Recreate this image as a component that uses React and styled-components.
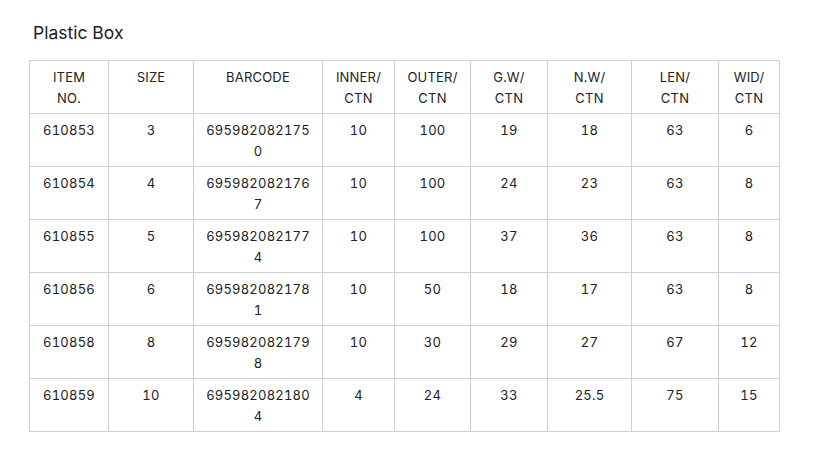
import React from "react";
import styled, { createGlobalStyle } from "styled-components";

const Global = createGlobalStyle`
  html, body { margin: 0; padding: 0; background: #fff; }
  body { font-family: Inter, "Noto Sans", Arial, sans-serif; color: #222; }
`;

const Page = styled.div`
  padding: 21px 0 0 29px;
  display: flex;
  flex-direction: column;
  align-items: flex-start;
`;

const Title = styled.h2`
  margin: 0 0 15px 4px;
  font-size: 17.5px;
  line-height: 24px;
  font-weight: 400;
  color: #222;
`;

const Table = styled.table`
  border-collapse: collapse;
  table-layout: fixed;
  width: 750px;
  font-size: 13px;
  line-height: 21px;
  font-variant-numeric: tabular-nums;
  letter-spacing: 0.2px;
`;

const Cell = styled.td`
  border: 1px solid #cfcfcf;
  padding: 6px 12px 4px;
  height: 42px;
  text-align: center;
  vertical-align: top;
  word-break: ${(p) => (p.$breakAll ? "break-all" : "normal")};
  color: #222;
  box-sizing: content-box;
`;

const Head = styled(Cell).attrs({ as: "th" })`
  font-weight: 400;
`;

const widths = [79, 85, 129, 72, 76, 77, 84, 87, 61];
const headers = [
  ["ITEM", "NO."],
  ["SIZE"],
  ["BARCODE"],
  ["INNER/", "CTN"],
  ["OUTER/", "CTN"],
  ["G.W/", "CTN"],
  ["N.W/", "CTN"],
  ["LEN/", "CTN"],
  ["WID/", "CTN"],
];

const rows = [
  ["610853", "3", "6959820821750", "10", "100", "19", "18", "63", "6"],
  ["610854", "4", "6959820821767", "10", "100", "24", "23", "63", "8"],
  ["610855", "5", "6959820821774", "10", "100", "37", "36", "63", "8"],
  ["610856", "6", "6959820821781", "10", "50", "18", "17", "63", "8"],
  ["610858", "8", "6959820821798", "10", "30", "29", "27", "67", "12"],
  ["610859", "10", "6959820821804", "4", "24", "33", "25.5", "75", "15"],
];

export default function App() {
  return (
    <Page>
      <Global />
      <Title>Plastic Box</Title>
      <Table>
        <colgroup>
          {widths.map((w, i) => (
            <col key={i} style={{ width: w }} />
          ))}
        </colgroup>
        <thead>
          <tr>
            {headers.map((h, i) => (
              <Head key={i}>
                {h.map((line, j) => (
                  <React.Fragment key={j}>
                    {j > 0 && <br />}
                    {line}
                  </React.Fragment>
                ))}
              </Head>
            ))}
          </tr>
        </thead>
        <tbody>
          {rows.map((r, i) => (
            <tr key={i}>
              {r.map((c, j) => (
                <Cell key={j} $breakAll={j === 2}>
                  {c}
                </Cell>
              ))}
            </tr>
          ))}
        </tbody>
      </Table>
    </Page>
  );
}
